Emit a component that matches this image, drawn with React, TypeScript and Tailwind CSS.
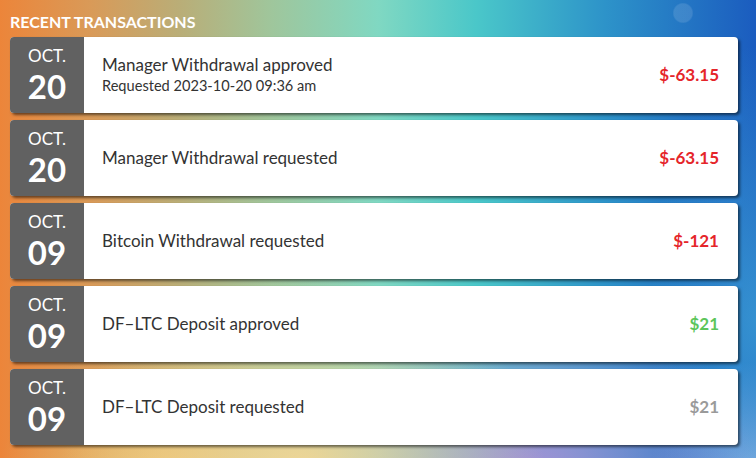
const TRANSACTIONS = [
  { month: "OCT.", day: "20", title: "Manager Withdrawal approved", sub: "Requested 2023-10-20 09:36 am", amount: "$-63.15", tone: "red" },
  { month: "OCT.", day: "20", title: "Manager Withdrawal requested", amount: "$-63.15", tone: "red" },
  { month: "OCT.", day: "09", title: "Bitcoin Withdrawal requested", amount: "$-121", tone: "red" },
  { month: "OCT.", day: "09", title: "DF\u2013LTC Deposit approved", amount: "$21", tone: "green" },
  { month: "OCT.", day: "09", title: "DF\u2013LTC Deposit requested", amount: "$21", tone: "gray" },
] as const

const TONE = {
  red: "text-[#e5252a]",
  green: "text-[#5cc55a]",
  gray: "text-[#9a9a9a]",
} as const

export default function App() {
  return (
    <div
      className="h-[458px] w-[756px] overflow-hidden pl-[10px] pr-[18px] pt-[12px] font-['Lato','Noto_Sans',sans-serif] bg-[radial-gradient(circle_at_683px_13px,rgba(255,255,255,0.12)_9px,transparent_10.5px),radial-gradient(ellipse_32%_42%_at_40%_102%,rgba(243,214,150,0.95),transparent),radial-gradient(ellipse_30%_40%_at_70%_104%,rgba(172,142,214,0.95),transparent),radial-gradient(ellipse_22%_30%_at_22%_104%,rgba(242,196,110,0.9),transparent),radial-gradient(ellipse_14%_60%_at_100%_70%,rgba(70,180,220,0.6),transparent),radial-gradient(ellipse_14%_25%_at_100%_104%,rgba(150,176,228,0.95),transparent),linear-gradient(to_right,#ec853a_0%,#d99a58_12%,#b9ae78_24%,#9fc69c_36%,#80d8c2_50%,#4ac7c9_63%,#2d93c9_80%,#1b5cbf_100%)]"
    >
      <h2 className="mb-[5px] text-[16px] font-bold leading-[20px] text-white">
        RECENT TRANSACTIONS
      </h2>
      <div className="flex flex-col gap-[7px]">
        {TRANSACTIONS.map((t, i) => (
          <div
            key={i}
            className="flex h-[76px] overflow-hidden rounded-[4px] bg-white shadow-[2px_2px_3px_rgba(0,0,0,0.55)]"
          >
            <div className="flex w-[74px] shrink-0 flex-col items-center justify-center bg-[#616161] pt-[2px] text-white">
              <span className="text-[17px] leading-[20px]">{t.month}</span>
              <span className="text-[33px] font-bold leading-[40px]">{t.day}</span>
            </div>
            <div className="flex flex-1 items-center justify-between pl-[18px] pr-[19px]">
              <div className="flex flex-col text-[#333]">
                <span className="text-[17px] leading-[22px]">{t.title}</span>
                {"sub" in t && <span className="text-[14.6px] leading-[20px]">{t.sub}</span>}
              </div>
              <span className={`text-[17px] font-bold ${TONE[t.tone]}`}>{t.amount}</span>
            </div>
          </div>
        ))}
      </div>
    </div>
  )
}
